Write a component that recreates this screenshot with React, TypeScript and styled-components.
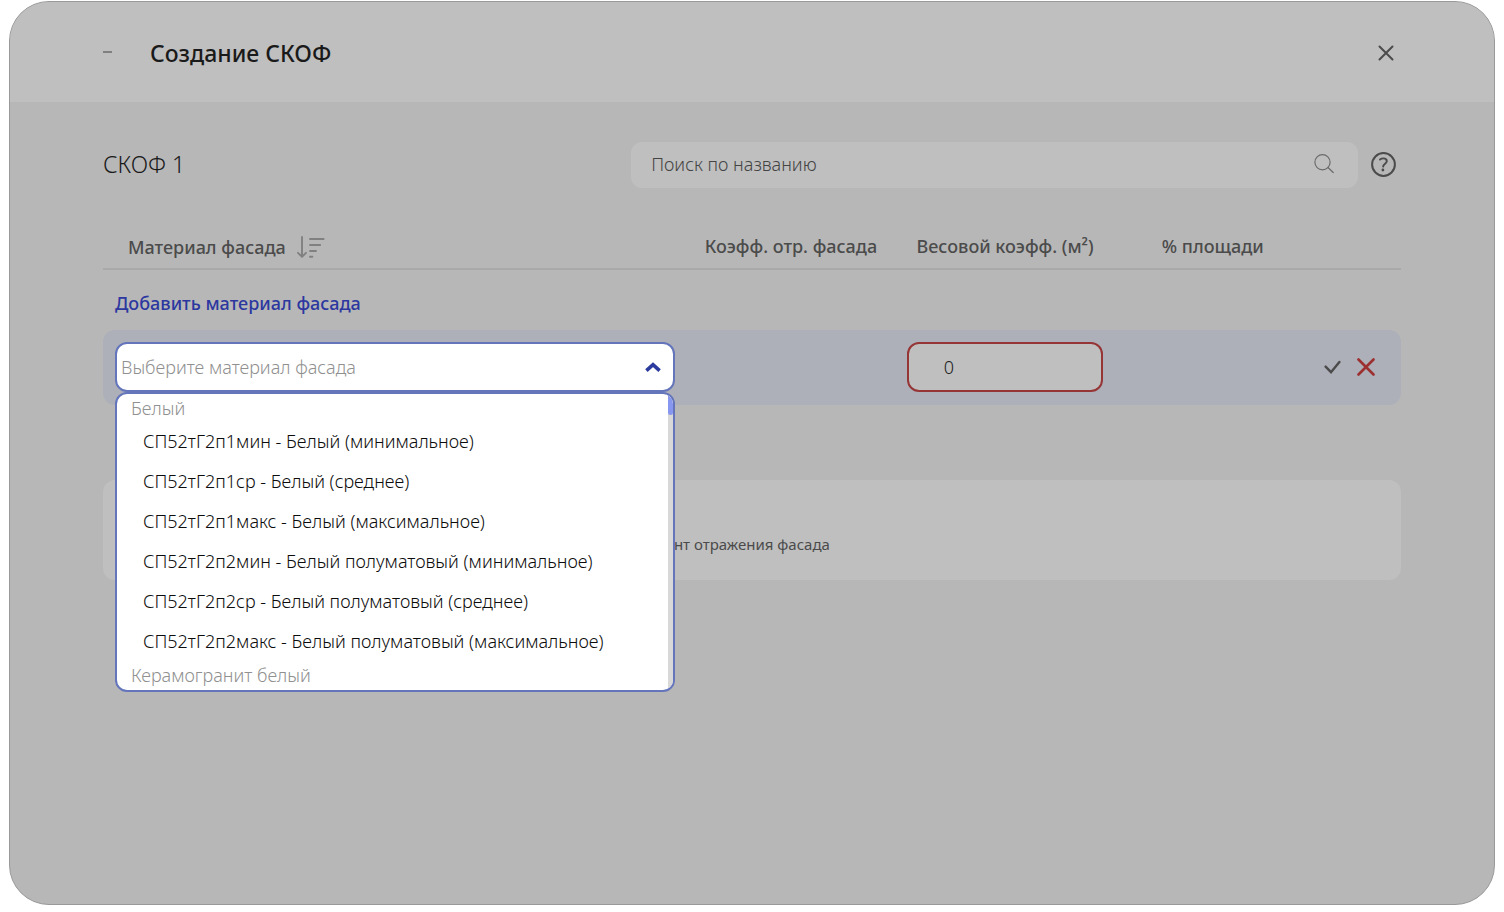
import React from "react";
import styled, { createGlobalStyle, css } from "styled-components";

const GlobalStyle = createGlobalStyle`
  *, *::before, *::after { box-sizing: border-box; }
  body {
    margin: 0;
    background: #ffffff;
    font-family: "Noto Sans", "Open Sans", sans-serif;
    font-size: 18px;
    font-weight: 300;
    color: #1a1a1a;
  }
  button, input { font: inherit; color: inherit; }
`;

const Dialog = styled.main`
  display: flex;
  flex-direction: column;
  margin: 1px 9px 7px;
  min-height: calc(100vh - 8px);
  border: 1px solid #999999;
  border-radius: 40px;
  background: #b7b7b7;
  overflow: hidden;
`;

const DialogHeader = styled.header`
  display: flex;
  align-items: center;
  height: 100px;
  padding: 2px 100px 0 93px;
  background: #bfbfbf;
`;

const Dash = styled.span`
  width: 9px;
  height: 2px;
  margin: 0 38px 2px 0;
  background: #808080;
`;

const DialogTitle = styled.h1`
  flex: 1;
  margin: 0;
  font-size: 23px;
  line-height: 32px;
  font-weight: 500;
`;

const IconButton = styled.button<{ $color?: string }>`
  display: inline-flex;
  padding: 0;
  border: 0;
  background: none;
  color: ${(p) => p.$color ?? "#4b4b4b"};
  cursor: pointer;
`;

const Body = styled.div`
  padding: 40px 93px;
`;

const TopRow = styled.div`
  display: flex;
  align-items: center;
`;

const HelpSlot = styled.div`
  display: flex;
  width: 43px;
  padding: 0 0 2px 13px;
`;

const SectionTitle = styled.h2`
  flex: 1;
  margin: 0;
  padding-bottom: 2px;
  font-size: 23px;
  line-height: 32px;
  font-weight: 300;
`;

const SearchBox = styled.label`
  display: flex;
  align-items: center;
  width: 56%;
  height: 46px;
  padding: 0 24px 2px 20px;
  border-radius: 11px;
  background: #bfbfbf;
  color: #6b6b6b;
`;

const SearchInput = styled.input`
  flex: 1;
  min-width: 0;
  padding: 0;
  border: 0;
  outline: 0;
  background: none;
  &::placeholder { color: #444444; opacity: 1; }
`;

const Table = styled.table`
  width: 100%;
  margin-top: 35px;
  table-layout: fixed;
  border-collapse: separate;
  border-spacing: 0;
`;

const HeadCell = styled.th<{ $width: string; $first?: boolean }>`
  width: ${(p) => p.$width};
  height: 47px;
  padding: ${(p) => (p.$first ? "2px 0 0 25px" : "0")};
  border-bottom: 2px solid #a9a9a9;
  text-align: ${(p) => (p.$first ? "left" : "center")};
  font-weight: 500;
  line-height: 24px;
  color: #4b4b4b;
  white-space: nowrap;
`;

const SortLabel = styled.span`
  display: flex;
  align-items: center;
  gap: 11px;
`;

const AddCell = styled.td`
  height: 60px;
  padding: 6px 12px 0;
`;

const AddButton = styled.button`
  display: block;
  padding: 0;
  border: 0;
  background: none;
  font-weight: 500;
  line-height: 24px;
  color: #2c37a0;
  cursor: pointer;
`;

const EditCell = styled.td`
  height: 75px;
  padding: 0 12px 2px;
  background: #adb0b9;
  &:first-child { border-radius: 12px 0 0 12px; }
  &:last-child { border-radius: 0 12px 12px 0; }
`;

const fieldFrame = css`
  width: 100%;
  height: 50px;
  border-radius: 12px;
`;

const WeightInput = styled.input`
  ${fieldFrame}
  display: block;
  padding: 0 35px;
  border: 2px solid #963535;
  outline: 0;
  background: #bfbfbf;
`;

const Combo = styled.div`
  position: relative;
`;

const ComboField = styled.div`
  ${fieldFrame}
  display: flex;
  align-items: center;
  padding: 0 12px 0 4px;
  border: 2px solid #6475bb;
  background: #ffffff;
`;

const ComboInput = styled.input`
  flex: 1;
  min-width: 0;
  padding: 0;
  border: 0;
  outline: 0;
  background: none;
  &::placeholder { color: #909090; opacity: 1; }
`;

const Dropdown = styled.div`
  position: absolute;
  top: 100%;
  left: 0;
  z-index: 2;
  display: flex;
  width: 100%;
  height: 300px;
  border: 2px solid #6475bb;
  border-radius: 12px;
  background: #ffffff;
  overflow: hidden;
`;

const OptionList = styled.div`
  flex: 1;
  overflow: hidden;
`;

const GroupLabel = styled.div`
  padding: 2px 0 1px 14px;
  line-height: 24px;
  color: #909090;
`;

const Option = styled.div`
  padding-left: 26px;
  line-height: 40px;
  color: #0c0c0c;
  white-space: nowrap;
  cursor: pointer;
`;

const ScrollTrack = styled.div`
  width: 5px;
  background: #d8d8d8;
`;

const ScrollThumb = styled.div`
  height: 21px;
  border-radius: 3px;
  background: #8796ee;
`;

const RowActions = styled.div`
  display: flex;
  align-items: center;
  gap: 16px;
  padding-left: 2px;
`;

const Summary = styled.section`
  height: 100px;
  margin-top: 75px;
  padding-top: 53px;
  border-radius: 12px;
  background: #bfbfbf;
`;

const SummaryText = styled.p`
  width: 56%;
  margin: 0;
  text-align: right;
  font-size: 15px;
  line-height: 22px;
  font-weight: 400;
  color: #4b4b4b;
`;

const groups = [
  {
    label: "Белый",
    options: [
      "СП52тГ2п1мин - Белый (минимальное)",
      "СП52тГ2п1ср - Белый (среднее)",
      "СП52тГ2п1макс - Белый (максимальное)",
      "СП52тГ2п2мин - Белый полуматовый (минимальное)",
      "СП52тГ2п2ср - Белый полуматовый (среднее)",
      "СП52тГ2п2макс - Белый полуматовый (максимальное)",
    ],
  },
  { label: "Керамогранит белый", options: [] },
];

const CloseIcon = () => (
  <svg width="16" height="16" viewBox="0 0 16 16" fill="none" stroke="currentColor" strokeWidth="2" strokeLinecap="round" aria-hidden="true">
    <path d="M1.5 1.5l13 13M14.5 1.5l-13 13" />
  </svg>
);

const SearchIcon = () => (
  <svg width="20" height="20" viewBox="0 0 20 20" fill="none" stroke="currentColor" strokeWidth="1.2" strokeLinecap="round" aria-hidden="true">
    <circle cx="8.5" cy="8.2" r="7.6" />
    <path d="M14 13.5l5.2 5" />
  </svg>
);

const HelpIcon = () => (
  <svg width="25" height="25" viewBox="0 0 25 25" fill="none" stroke="currentColor" strokeWidth="2" strokeLinecap="round" aria-hidden="true">
    <circle cx="12.5" cy="12.5" r="11.4" />
    <path d="M9 7.6C10 6.8 11.2 6.4 12.4 6.4C14.5 6.4 15.8 7.5 15.8 9.2C15.8 11.6 12.2 11.8 12.1 14.6" strokeWidth="1.9" />
    <circle cx="11.9" cy="18" r="1.4" fill="currentColor" stroke="none" />
  </svg>
);

const SortIcon = () => (
  <svg width="28" height="22" viewBox="0 0 28 22" fill="none" stroke="#808080" strokeWidth="1.9" strokeLinecap="round" strokeLinejoin="round" aria-hidden="true">
    <path d="M5 1v19.5M1 16.8l4 4 4-4" />
    <path d="M13 3h13.6M13 9h10.2M13 15h6M13 20.7h2.4" />
  </svg>
);

const ChevronUpIcon = () => (
  <svg width="16" height="10" viewBox="0 0 16 10" fill="none" stroke="#2b3b9e" strokeWidth="3.6" aria-hidden="true">
    <path d="M1.4 8.6L8 2.6l6.6 6" />
  </svg>
);

const CheckIcon = () => (
  <svg width="17" height="14" viewBox="0 0 17 14" fill="none" stroke="currentColor" strokeWidth="2.4" strokeLinecap="round" aria-hidden="true">
    <path d="M1.6 6.6l5.4 5.6L15.4 2" />
  </svg>
);

const CancelIcon = () => (
  <svg width="18" height="18" viewBox="0 0 18 18" fill="none" stroke="currentColor" strokeWidth="2.6" strokeLinecap="round" aria-hidden="true">
    <path d="M1.5 1.5l15 15M16.5 1.5l-15 15" />
  </svg>
);

export default function App() {
  return (
    <>
      <GlobalStyle />
      <Dialog>
        <DialogHeader>
          <Dash />
          <DialogTitle>Создание СКОФ</DialogTitle>
          <IconButton type="button" aria-label="Закрыть">
            <CloseIcon />
          </IconButton>
        </DialogHeader>
        <Body>
          <TopRow>
            <SectionTitle>СКОФ 1</SectionTitle>
            <SearchBox>
              <SearchInput type="text" placeholder="Поиск по названию" aria-label="Поиск по названию" />
              <SearchIcon />
            </SearchBox>
            <HelpSlot>
              <IconButton type="button" aria-label="Справка">
                <HelpIcon />
              </IconButton>
            </HelpSlot>
          </TopRow>

          <Table>
            <thead>
              <tr>
                <HeadCell scope="col" $width="45%" $first>
                  <SortLabel>
                    Материал фасада
                    <IconButton type="button" aria-label="Сортировать">
                      <SortIcon />
                    </IconButton>
                  </SortLabel>
                </HeadCell>
                <HeadCell scope="col" $width="16%">Коэфф. отр. фасада</HeadCell>
                <HeadCell scope="col" $width="17%">Весовой коэфф. (м²)</HeadCell>
                <HeadCell scope="col" $width="15%">% площади</HeadCell>
                <HeadCell as="td" $width="7%" />
              </tr>
            </thead>
            <tbody>
              <tr>
                <AddCell colSpan={5}>
                  <AddButton type="button">Добавить материал фасада</AddButton>
                </AddCell>
              </tr>
              <tr>
                <EditCell>
                  <Combo>
                    <ComboField>
                      <ComboInput
                        type="text"
                        role="combobox"
                        aria-expanded="true"
                        aria-controls="material-options"
                        aria-label="Материал фасада"
                        placeholder="Выберите материал фасада"
                      />
                      <IconButton type="button" aria-label="Свернуть список">
                        <ChevronUpIcon />
                      </IconButton>
                    </ComboField>
                    <Dropdown>
                      <OptionList id="material-options" role="listbox" aria-label="Материал фасада">
                        {groups.map((group) => (
                          <div key={group.label} role="group" aria-label={group.label}>
                            <GroupLabel>{group.label}</GroupLabel>
                            {group.options.map((name) => (
                              <Option key={name} role="option" aria-selected="false">
                                {name}
                              </Option>
                            ))}
                          </div>
                        ))}
                      </OptionList>
                      <ScrollTrack>
                        <ScrollThumb />
                      </ScrollTrack>
                    </Dropdown>
                  </Combo>
                </EditCell>
                <EditCell />
                <EditCell>
                  <WeightInput type="text" inputMode="decimal" defaultValue="0" aria-label="Весовой коэффициент" />
                </EditCell>
                <EditCell />
                <EditCell>
                  <RowActions>
                    <IconButton type="button" aria-label="Сохранить">
                      <CheckIcon />
                    </IconButton>
                    <IconButton type="button" aria-label="Отменить" $color="#9c2f2f">
                      <CancelIcon />
                    </IconButton>
                  </RowActions>
                </EditCell>
              </tr>
            </tbody>
          </Table>

          <Summary>
            <SummaryText>Коэффициент отражения фасада</SummaryText>
          </Summary>
        </Body>
      </Dialog>
    </>
  );
}
